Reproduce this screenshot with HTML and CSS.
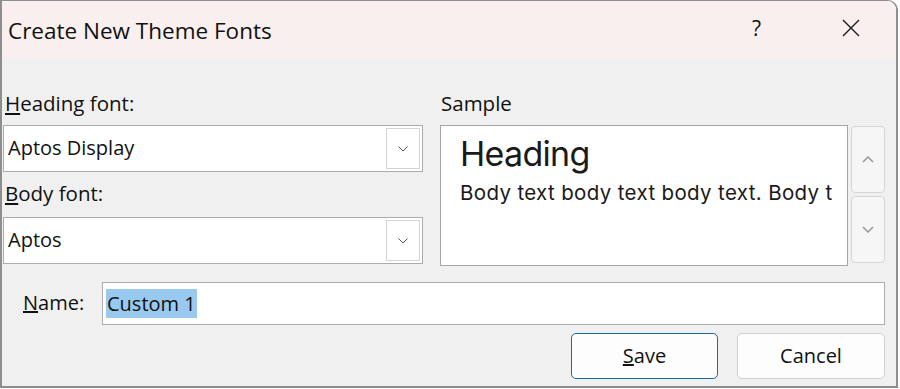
FILE: index.html
```html
<!DOCTYPE html>
<html lang="en">
<head>
    <meta charset="UTF-8">
    <meta name="viewport" content="width=device-width, initial-scale=1.0">
    <title>Create New Theme Fonts</title>
    <link rel="stylesheet" href="styles.css">
</head>
<body>
    <div class="dialog">
        <div class="titlebar">
            <span class="title">Create New Theme Fonts</span>
            <span class="help">?</span>
            <span class="close">
                <svg width="18" height="18" viewBox="0 0 18 18">
                    <path d="M1 1 L17 17 M17 1 L1 17" stroke="#1a1a1a" stroke-width="1.4" fill="none"/>
                </svg>
            </span>
        </div>

        <div class="content">
            <div class="top">
                <div class="fonts">
                    <label class="lbl"><u>H</u>eading font:</label>
                    <div class="combo">
                        <span class="combo-text">Aptos Display</span>
                        <span class="drop">
                            <svg width="10" height="6" viewBox="0 0 10 6"><path d="M0.5 0.5 L5 5 L9.5 0.5" stroke="#555" stroke-width="1" fill="none"/></svg>
                        </span>
                    </div>
                    <label class="lbl lbl-body"><u>B</u>ody font:</label>
                    <div class="combo">
                        <span class="combo-text">Aptos</span>
                        <span class="drop">
                            <svg width="10" height="6" viewBox="0 0 10 6"><path d="M0.5 0.5 L5 5 L9.5 0.5" stroke="#555" stroke-width="1" fill="none"/></svg>
                        </span>
                    </div>
                </div>

                <div class="sample-col">
                    <label class="lbl lbl-sample">Sample</label>
                    <div class="sample-row">
                        <div class="sample">
                            <div class="sample-heading">Heading</div>
                            <div class="sample-body">Body text body text body text. Body t</div>
                        </div>
                        <div class="scroll">
                            <div class="sbtn">
                                <svg width="12" height="7" viewBox="0 0 12 7"><path d="M1 6 L6 1 L11 6" stroke="#9a9a9a" stroke-width="1.6" fill="none"/></svg>
                            </div>
                            <div class="sbtn">
                                <svg width="12" height="7" viewBox="0 0 12 7"><path d="M1 1 L6 6 L11 1" stroke="#9a9a9a" stroke-width="1.6" fill="none"/></svg>
                            </div>
                        </div>
                    </div>
                </div>
            </div>

            <div class="name-row">
                <label class="name-lbl"><u>N</u>ame:</label>
                <div class="name-input"><span class="sel">Custom 1</span></div>
            </div>

            <div class="buttons">
                <button class="btn btn-save"><u>S</u>ave</button>
                <button class="btn">Cancel</button>
            </div>
        </div>
    </div>
</body>
</html>
```

FILE: styles.css
```css
body{
    margin: 0;
    background: #ffffff;
    font-family: "Open Sans", "Noto Sans", sans-serif;
    color: #111;
}
.dialog{
    width: 898px;
    height: 388px;
    box-sizing: border-box;
    border: 2px solid #8e8e8e;
    border-top-width: 1px;
    border-top-right-radius: 10px;
    background: #f0f0f0;
    overflow: hidden;
}
.titlebar{
    height: 57px;
    background: #f9efee;
    display: flex;
    align-items: center;
}
.title{
    flex: 1;
    font-size: 22.5px;
    padding-left: 6px;
    padding-top: 1px;
}
.help{
    font-size: 21px;
    width: 16px;
    margin-right: 74px;
    padding-bottom: 3px;
}
.close{
    display: flex;
    margin-right: 36px;
    margin-bottom: 3px;
}

.content{
    padding: 31px 11px 0 1px;
}
.top{
    display: flex;
    gap: 17px;
}
.fonts{
    width: 420px;
}
.lbl{
    display: block;
    font-size: 20.5px;
    line-height: 28px;
    margin-bottom: 8px;
    padding-left: 2px;
}
.lbl-body{
    margin-top: 7px;
    margin-bottom: 10px;
}
.combo{
    height: 47px;
    box-sizing: border-box;
    border: 1px solid #acacac;
    background: #fff;
    display: flex;
    align-items: center;
    padding: 2px 2px 2px 4px;
}
.combo-text{
    flex: 1;
    font-size: 20px;
    padding-bottom: 2px;
}
.drop{
    width: 34px;
    height: 100%;
    box-sizing: border-box;
    border: 1px solid #d4d4d4;
    display: flex;
    align-items: center;
    justify-content: center;
}

.sample-col{
    flex: 1;
}
.lbl-sample{
    padding-left: 1px;
    margin-bottom: 8px;
}
.sample-row{
    display: flex;
    gap: 3px;
}
.sample{
    width: 408px;
    height: 141px;
    box-sizing: border-box;
    border: 1px solid #a5a5a5;
    background: #fff;
    padding: 7px 0 0 19px;
    white-space: nowrap;
    font-family: Inter, Roboto, sans-serif;
    color: #1a1a1a;
}
.sample-heading{
    font-size: 34px;
    line-height: 42px;
    letter-spacing: -0.7px;
}
.sample-body{
    font-size: 20.5px;
    line-height: 32px;
    margin-top: 2px;
    letter-spacing: 0.35px;
}
.scroll{
    display: flex;
    flex-direction: column;
    gap: 3px;
    padding-top: 1px;
}
.sbtn{
    width: 34px;
    height: 67px;
    box-sizing: border-box;
    border: 1px solid #d6d6d6;
    border-radius: 4px;
    background: #f6f6f6;
    display: flex;
    align-items: center;
    justify-content: center;
}

.name-row{
    display: flex;
    align-items: center;
    margin-top: 16px;
}
.name-lbl{
    font-size: 20px;
    width: 79px;
    padding-left: 20px;
    padding-bottom: 2px;
}
.name-input{
    flex: 1;
    height: 43px;
    box-sizing: border-box;
    border: 1px solid #acacac;
    background: #fff;
    display: flex;
    align-items: center;
    padding-left: 3px;
    font-size: 20px;
}
.sel{
    background: #99c9ef;
    line-height: 29px;
    padding: 0 1px;
}

.buttons{
    display: flex;
    justify-content: flex-end;
    gap: 19px;
    margin-top: 8px;
}
.btn{
    width: 148px;
    height: 46px;
    border: 1px solid #d0d0d0;
    border-radius: 5px;
    background: #fdfdfd;
    font-family: "Open Sans", "Noto Sans", sans-serif;
    font-size: 20px;
    color: #111;
    padding: 0 0 2px 0;
}
.btn-save{
    border-color: #1a6aa8;
    width: 147px;
}
```
